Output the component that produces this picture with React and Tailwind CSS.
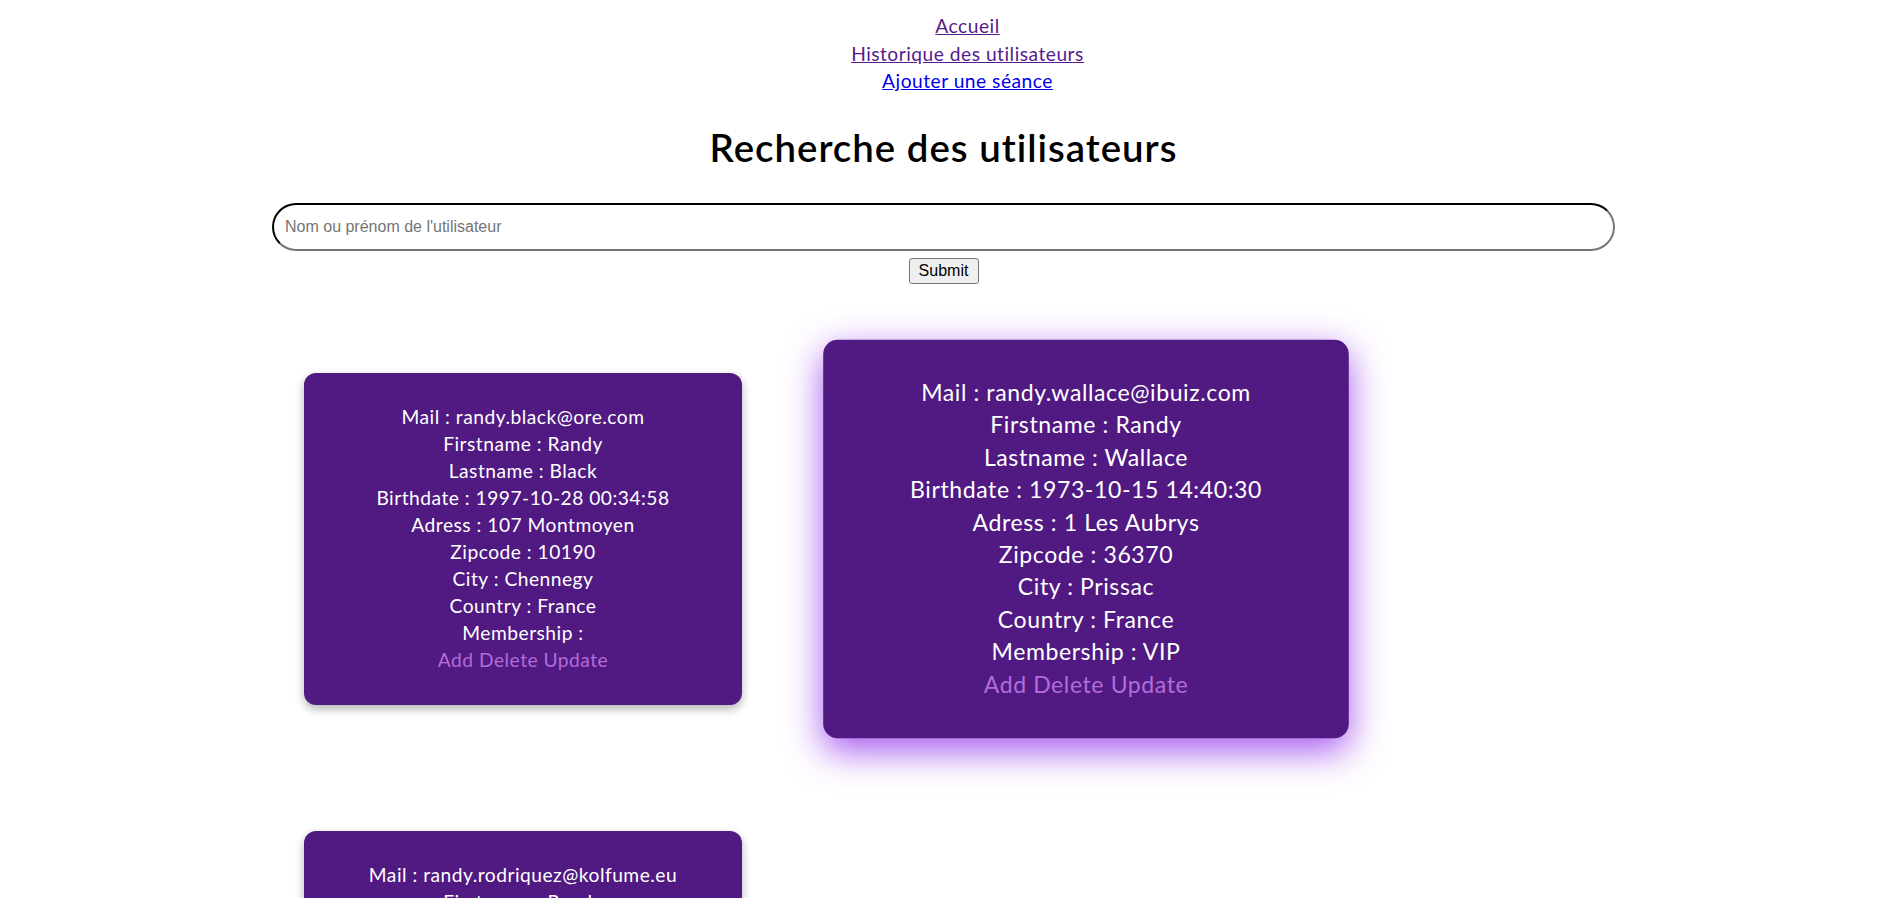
import React from "react";

const users = [
  {
    mail: "randy.black@ore.com",
    first: "Randy",
    last: "Black",
    birth: "1997-10-28 00:34:58",
    adress: "107 Montmoyen",
    zip: "10190",
    city: "Chennegy",
    country: "France",
    membership: "",
  },
  {
    mail: "randy.wallace@ibuiz.com",
    first: "Randy",
    last: "Wallace",
    birth: "1973-10-15 14:40:30",
    adress: "1 Les Aubrys",
    zip: "36370",
    city: "Prissac",
    country: "France",
    membership: "VIP",
    hover: true,
  },
  {
    mail: "randy.rodriquez@kolfume.eu",
    first: "Randy",
    last: "Rodriquez",
    birth: "1984-03-12 09:12:44",
    adress: "12 Rue des Lilas",
    zip: "75011",
    city: "Paris",
    country: "France",
    membership: "",
  },
];

function Card({ u }) {
  return (
    <div
      className={
        "w-[438px] rounded-[12px] bg-[#501a82] pt-[30px] pb-[32px] text-center text-white text-[19.2px] leading-[27px] tracking-[0.5px] " +
        (u.hover
          ? "scale-[1.2] shadow-[0_10px_30px_rgba(150,60,235,0.85)]"
          : "shadow-[0_4px_10px_rgba(0,0,0,0.3)]")
      }
    >
      <div>Mail : {u.mail}</div>
      <div>Firstname : {u.first}</div>
      <div>Lastname : {u.last}</div>
      <div>Birthdate : {u.birth}</div>
      <div>Adress : {u.adress}</div>
      <div>Zipcode : {u.zip}</div>
      <div>City : {u.city}</div>
      <div>Country : {u.country}</div>
      <div>Membership : {u.membership}</div>
      <div className="text-[#b36cd9]">
        <span>Add</span> <span>Delete</span> <span>Update</span>
      </div>
    </div>
  );
}

export default function App() {
  return (
    <div className="min-h-screen bg-white font-['Lato','Nunito','Noto_Sans',sans-serif] text-black">
      <nav className="flex flex-col items-center pt-[12px] pl-[48px] text-[19.2px] leading-[27.5px] tracking-[0.5px]">
        <a href="#" className="text-[#551a8b] underline">Accueil</a>
        <a href="#" className="text-[#551a8b] underline">Historique des utilisateurs</a>
        <a href="#" className="text-[#0000ee] underline">Ajouter une séance</a>
      </nav>
      <h1 className="mt-[26px] text-center text-[38.4px] leading-[52px] font-semibold tracking-[1px]">
        Recherche des utilisateurs
      </h1>
      <form className="mt-[30px] flex flex-col items-center">
        <input
          type="text"
          placeholder="Nom ou prénom de l'utilisateur"
          className="box-border h-[48px] w-[1343px] rounded-full border-2 border-t-black border-l-black border-b-[#777] border-r-[#777] bg-white pl-[11px] font-['Liberation_Sans',Arial,sans-serif] text-[16px] text-black placeholder:text-[#757575] outline-none"
        />
        <button
          type="button"
          className="mt-[7px] h-[26px] w-[70px] rounded-[3px] border border-[#767676] bg-[#efefef] font-['Liberation_Sans',Arial,sans-serif] text-[16px] leading-none text-black"
        >
          Submit
        </button>
      </form>
      <div className="flex flex-wrap gap-x-[125px] gap-y-[126px] px-[304px] pt-[89px] pb-[60px]">
        {users.map((u) => (
          <Card key={u.mail} u={u} />
        ))}
      </div>
    </div>
  );
}
